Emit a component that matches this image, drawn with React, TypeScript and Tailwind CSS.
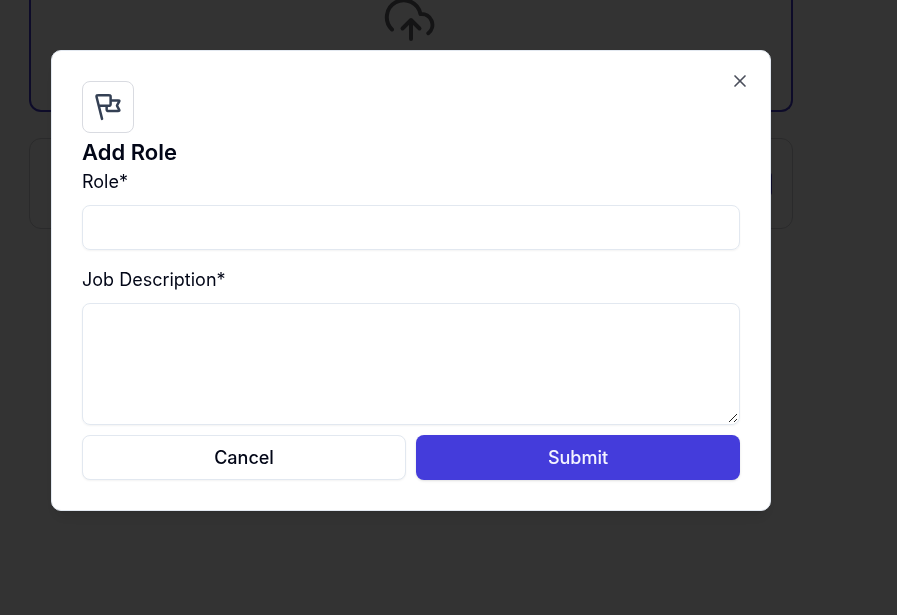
import React from "react";
import { X } from "lucide-react";

function FlagIcon() {
  return (
    <svg
      viewBox="0 0 24 24"
      fill="none"
      stroke="currentColor"
      strokeWidth="2"
      strokeLinecap="round"
      strokeLinejoin="round"
      className="size-[30px]"
      aria-hidden="true"
    >
      <path d="M14.0914 6.72222H20.0451C20.5173 6.72222 20.7534 6.72222 20.8914 6.82149C21.0119 6.9081 21.0903 7.04141 21.1075 7.18877C21.1272 7.35767 21.0126 7.56403 20.7833 7.97677L19.3624 10.5343C19.2793 10.684 19.2377 10.7589 19.2214 10.8381C19.207 10.9083 19.207 10.9806 19.2214 11.0508C19.2377 11.13 19.2793 11.2049 19.3624 11.3546L20.7833 13.9121C21.0126 14.3248 21.1272 14.5312 21.1075 14.7001C21.0903 14.8475 21.0119 14.9808 20.8914 15.0674C20.7534 15.1667 20.5173 15.1667 20.0451 15.1667H12.6136C12.0224 15.1667 11.7269 15.1667 11.5011 15.0516C11.3024 14.9504 11.1409 14.7889 11.0398 14.5903C10.9247 14.3645 10.9247 14.0689 10.9247 13.4778V10.9444M7.23027 21.5L3.00805 4.61111M4.59143 10.9444H12.4025C12.9937 10.9444 13.2892 10.9444 13.515 10.8294C13.7137 10.7282 13.8752 10.5667 13.9763 10.368C14.0914 10.1423 14.0914 9.84672 14.0914 9.25556V4.18889C14.0914 3.59772 14.0914 3.30214 13.9763 3.07634C13.8752 2.87773 13.7137 2.71625 13.515 2.61505C13.2892 2.5 12.9937 2.5 12.4025 2.5H4.64335C3.90602 2.5 3.53735 2.5 3.2852 2.65278C3.0642 2.78668 2.89999 2.99699 2.82369 3.24387C2.73663 3.52555 2.82605 3.88321 3.00487 4.59852L4.59143 10.9444Z" />
    </svg>
  );
}

function UploadIcon() {
  return (
    <svg
      viewBox="0 0 60 46"
      fill="none"
      stroke="currentColor"
      strokeWidth="4"
      strokeLinecap="round"
      strokeLinejoin="round"
      className="h-[46px] w-[60px] text-[#64646a]"
      aria-hidden="true"
    >
      <path d="M11 29.5A17 17 0 1 1 39.5 14A10.8 10.8 0 0 1 47.3 33.2" />
      <path d="M30 39V20M21.5 28.5L30 20L38.5 28.5" />
    </svg>
  );
}

function UploadPage() {
  return (
    <main className="flex max-w-[822px] flex-col gap-[26px] px-[29px]">
      <section className="flex h-28 justify-center rounded-b-xl border-2 border-t-0 border-[#4338ca]">
        <UploadIcon />
      </section>
      <section className="flex h-[91px] items-center justify-end rounded-xl border border-[#cfcfd4] px-5">
        <span className="h-6 w-5 rounded-sm bg-[#4338ca]" />
      </section>
    </main>
  );
}

function RoleDialog() {
  return (
    <div
      role="dialog"
      aria-modal="true"
      aria-labelledby="role-title"
      className="relative w-full max-w-[720px] rounded-[10px] border border-[#e2e8f0] bg-white p-[30px] shadow-lg"
    >
      <button
        type="button"
        aria-label="Close"
        className="absolute top-5 right-5 text-[#4b4f5c]"
      >
        <X className="size-5" strokeWidth={2} />
      </button>
      <form>
        <div className="flex size-[52px] items-center justify-center rounded-lg border border-[#d9dbe1] text-[#344054]">
          <FlagIcon />
        </div>
        <h2 id="role-title" className="mt-1 text-[22px] leading-[30px] font-semibold">
          Add Role
        </h2>
        <label htmlFor="role" className="mt-1 block text-[18px] leading-[22px]">
          Role*
        </label>
        <input
          id="role"
          type="text"
          className="mt-3 block h-[45px] w-full rounded-lg border border-[#e2e8f0] px-4 text-[18px] shadow-xs outline-none"
        />
        <label htmlFor="description" className="mt-[19px] block text-[18px] leading-[22px]">
          Job Description*
        </label>
        <div className="relative mt-3">
          <textarea
            id="description"
            className="block h-[122px] w-full resize-y rounded-lg border border-[#e2e8f0] px-4 py-2 text-[18px] shadow-xs outline-none [&::-webkit-resizer]:hidden"
          />
          <svg
            viewBox="0 0 10 10"
            className="pointer-events-none absolute right-[2px] bottom-[2px] size-[10px]"
            stroke="#222222"
            strokeWidth="1"
            aria-hidden="true"
          >
            <path d="M1 9L9 1M6 9L9 6" />
          </svg>
        </div>
        <div className="mt-[10px] grid grid-cols-2 gap-[10px] text-[18px] font-medium">
          <button type="button" className="h-[45px] rounded-lg border border-[#e2e8f0] bg-white shadow-xs">
            Cancel
          </button>
          <button type="submit" className="h-[45px] rounded-lg bg-[#443cdb] text-[#f4f4ff] shadow-sm">
            Submit
          </button>
        </div>
      </form>
    </div>
  );
}

export default function App() {
  return (
    <div className="min-h-screen bg-white font-['Inter',sans-serif] text-[#020617]">
      <UploadPage />
      <div className="fixed inset-0 overflow-y-auto bg-black/80">
        <div className="flex max-w-[822px] justify-center px-[51px] pt-[50px] pb-8">
          <RoleDialog />
        </div>
      </div>
    </div>
  );
}
